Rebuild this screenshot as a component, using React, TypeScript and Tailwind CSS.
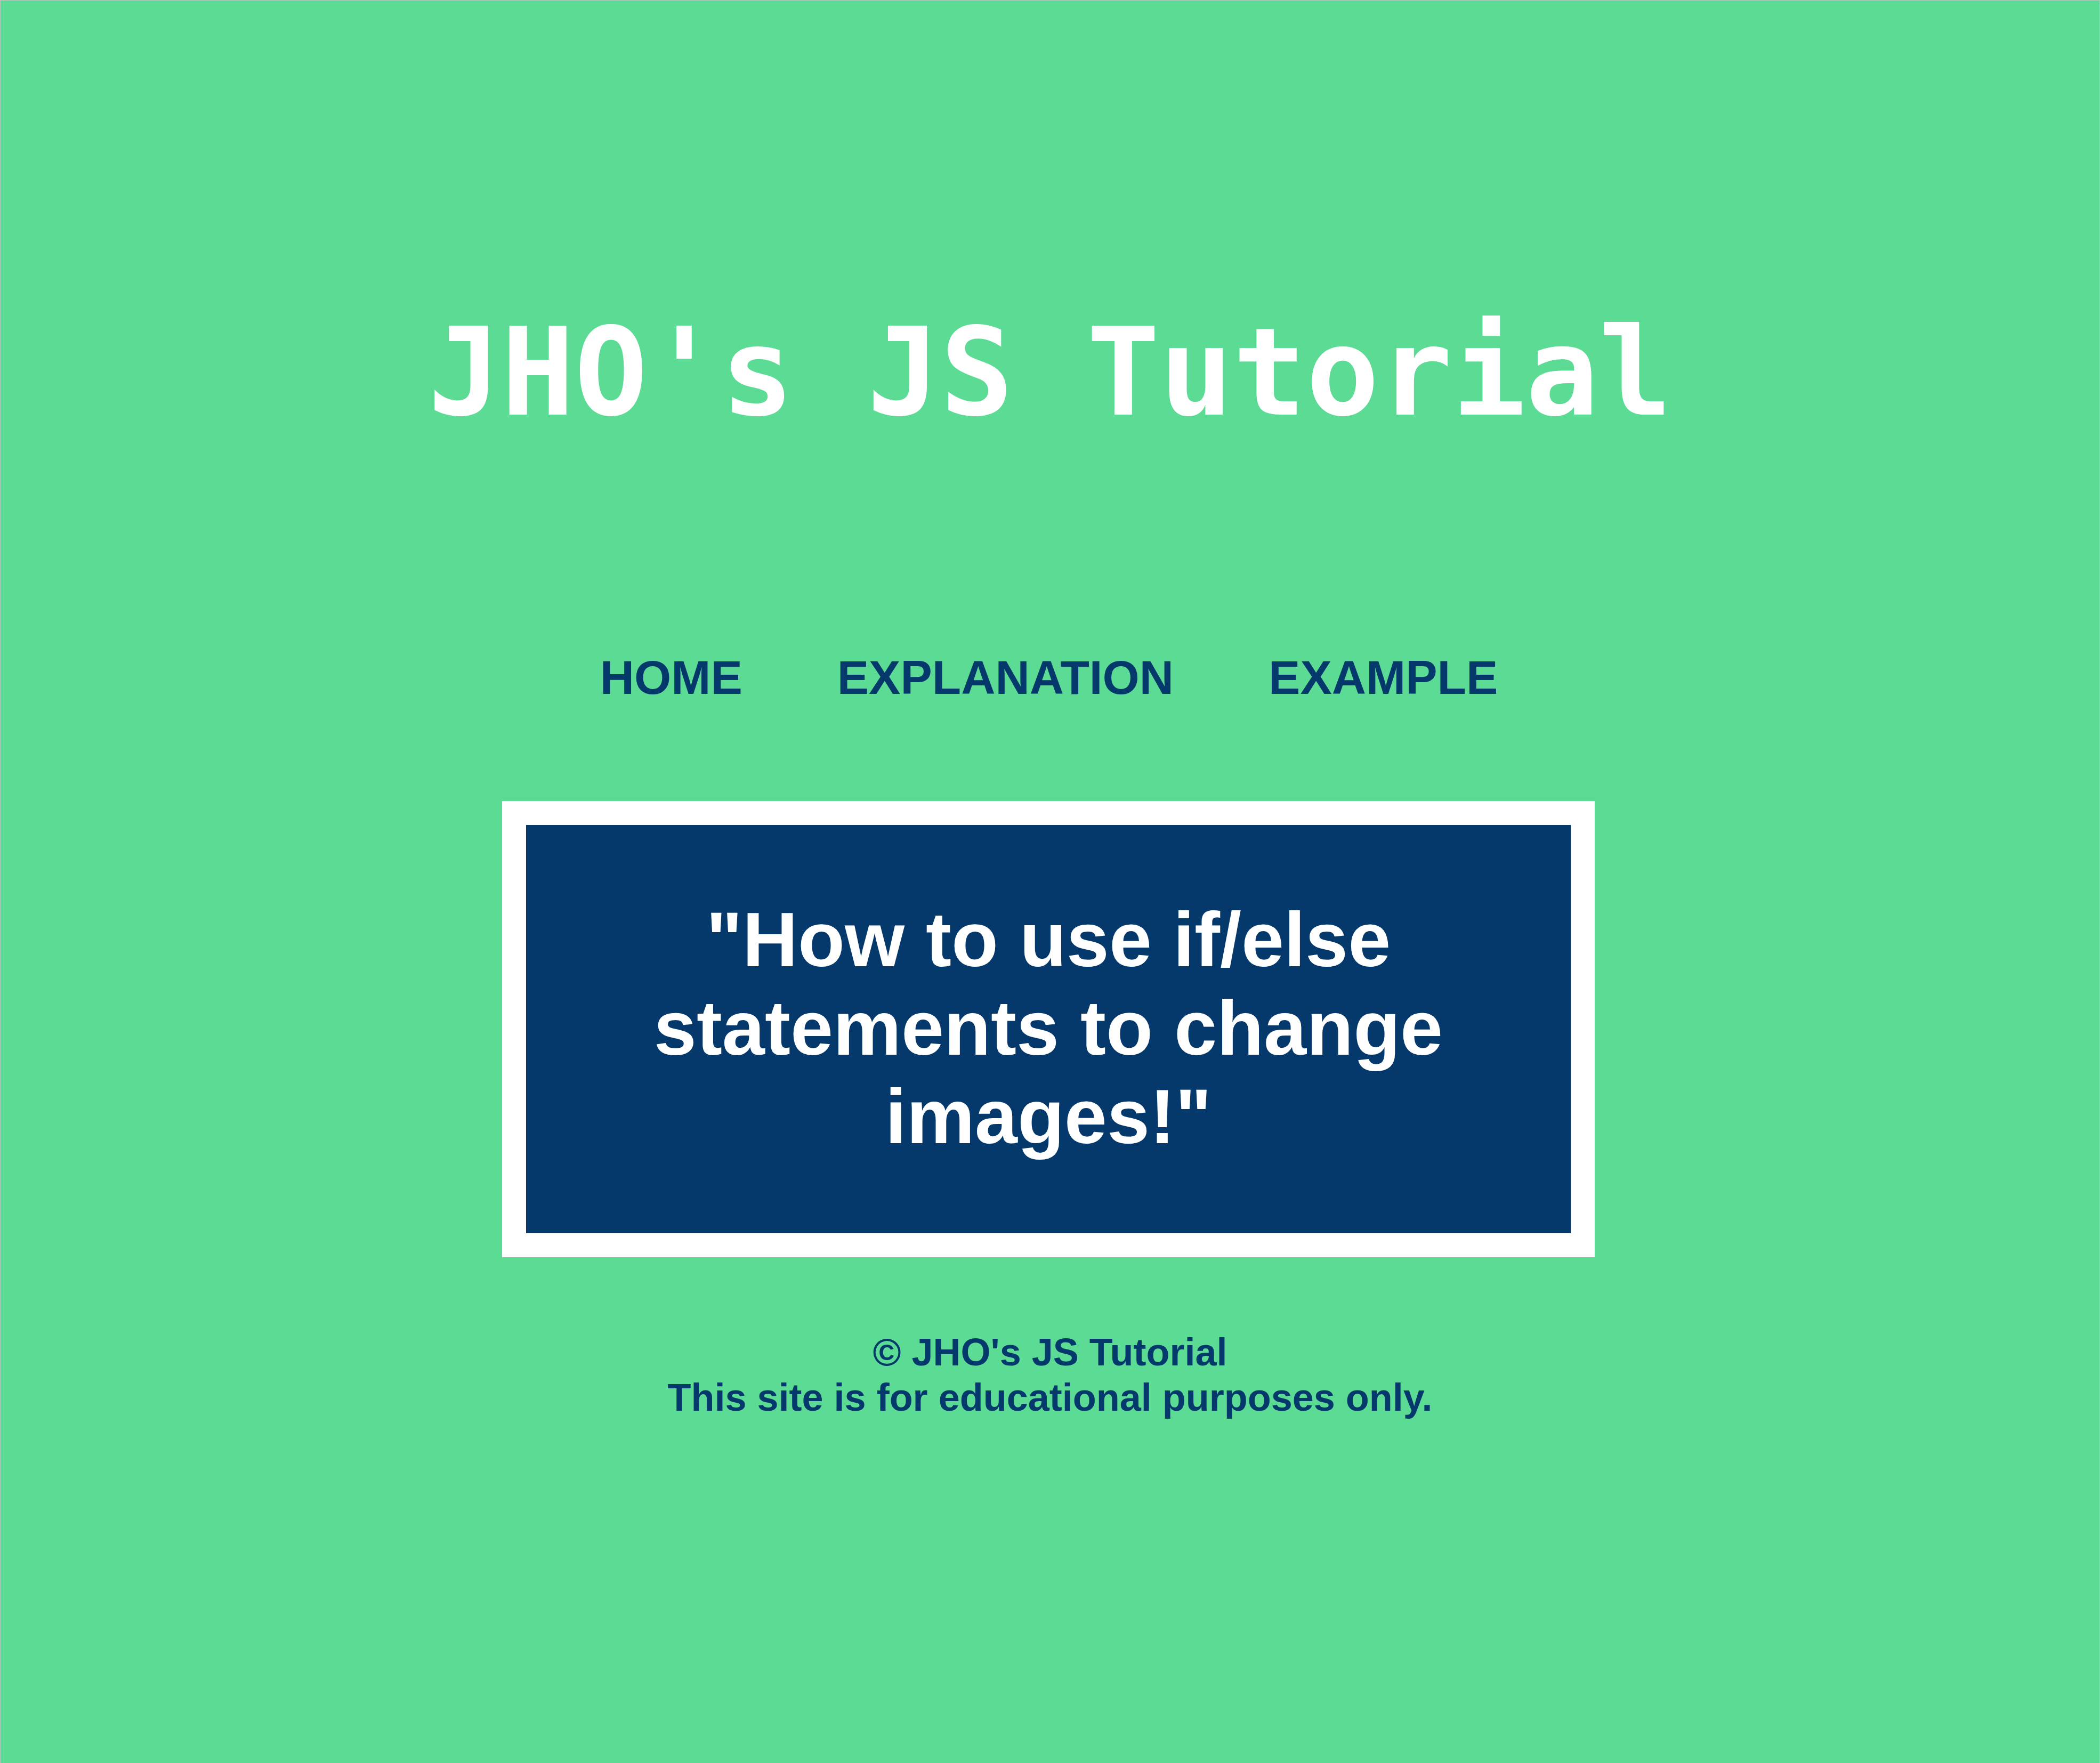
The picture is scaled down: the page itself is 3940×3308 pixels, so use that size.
import React from "react";

export default function App() {
  return (
    <div className="min-h-[3308px] w-full bg-[#5CDB95] border-t border-l border-r border-[#b8c8bf] flex flex-col items-center font-['Liberation_Sans',Arial,sans-serif]">
      <h1 className="pt-[584px] text-[228px] leading-none text-white font-bold whitespace-pre font-['DejaVu_Sans_Mono','Liberation_Mono',monospace]">
        JHO's JS Tutorial
      </h1>
      <nav className="mt-[414px] flex items-center gap-[178px] text-[89px] leading-none font-bold text-[#05386B] -translate-x-[2px]">
        <a>HOME</a>
        <a>EXPLANATION</a>
        <a>EXAMPLE</a>
      </nav>
      <div className="mt-[187px] w-[2050px] border-[45px] border-white bg-[#05386B] -translate-x-[3px]">
        <h2 className="px-[180px] pt-[133px] pb-[135px] text-center text-[144px] leading-[166px] font-bold text-white">
          "How to use if/else statements to change images!"
        </h2>
      </div>
      <footer className="mt-[136px] text-center text-[72px] leading-[85px] font-bold text-[#05386B]">
        <p>© JHO's JS Tutorial</p>
        <p>This site is for educational purposes only.</p>
      </footer>
    </div>
  );
}
